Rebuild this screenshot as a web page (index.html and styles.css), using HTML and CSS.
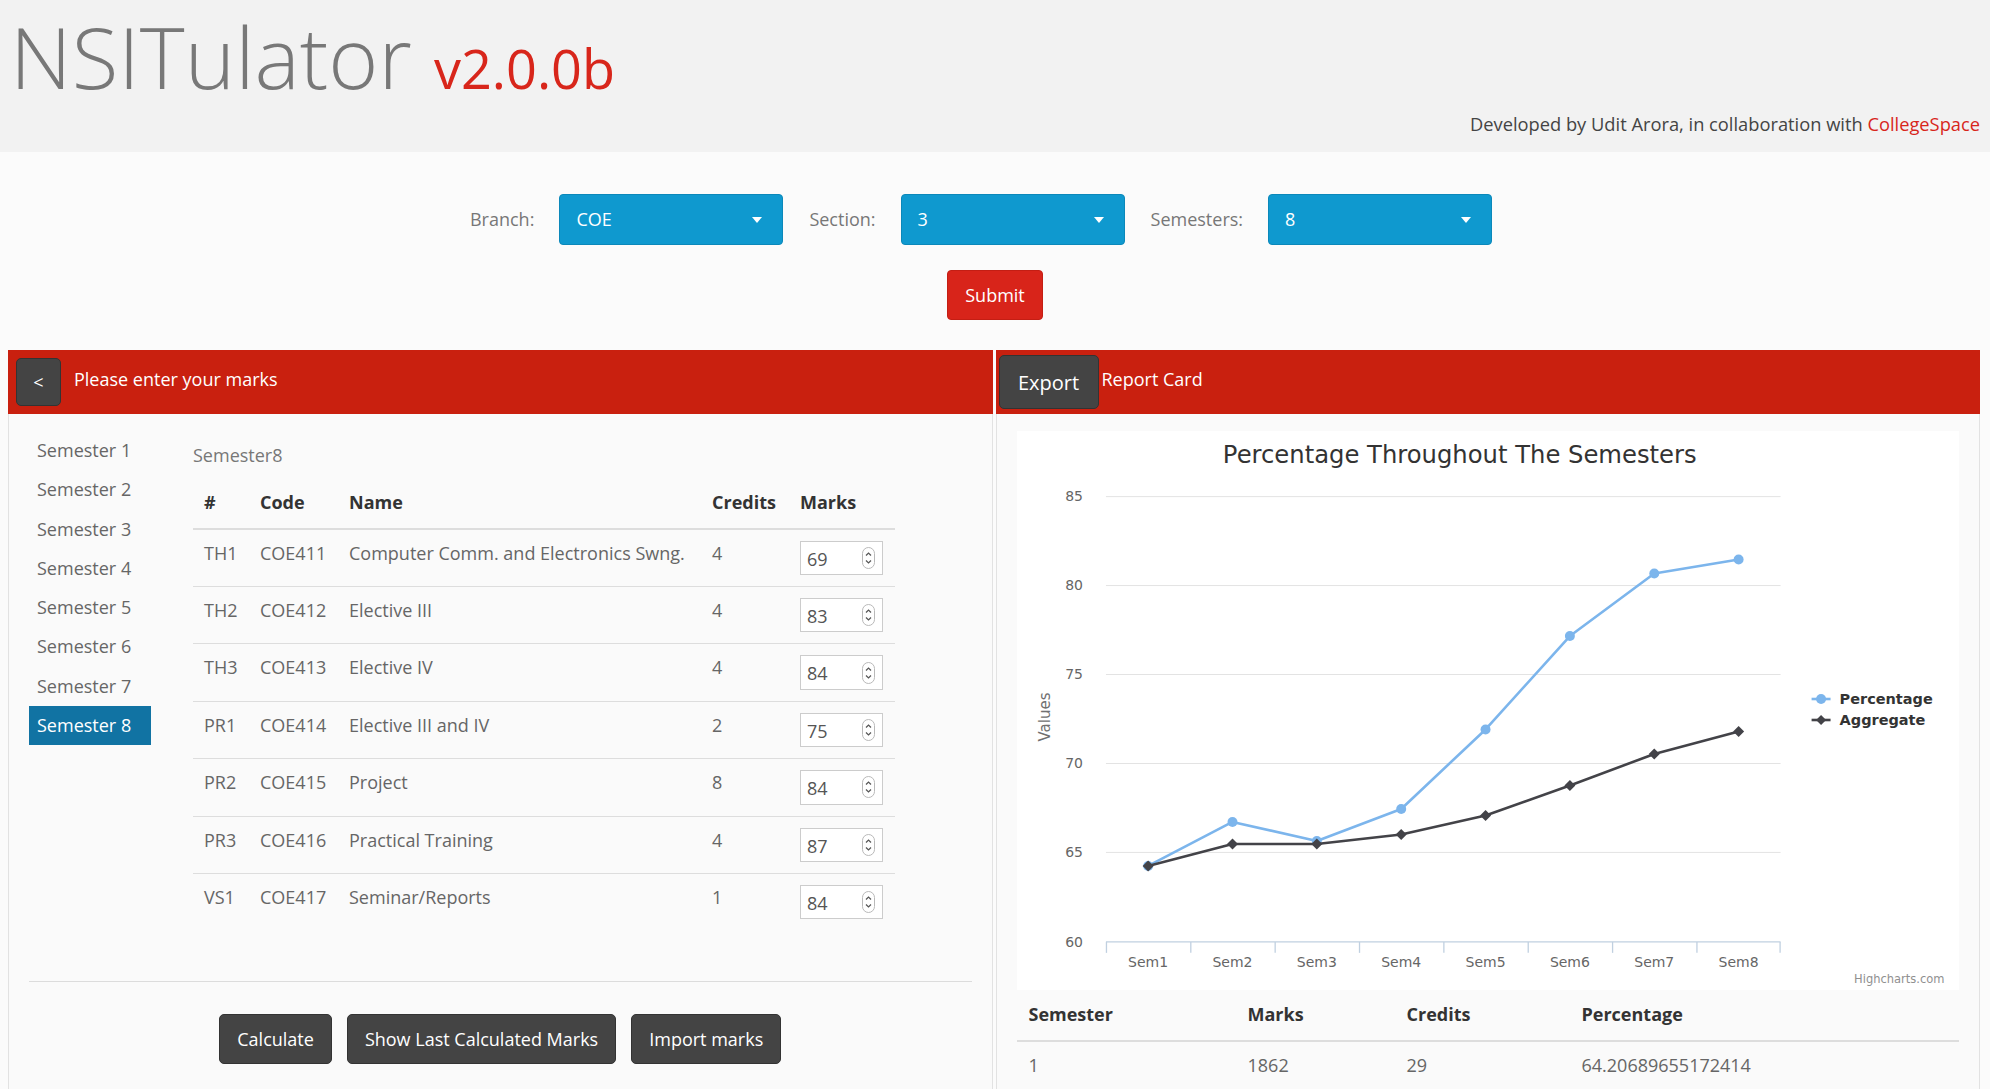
FILE: index.html
```html
<!DOCTYPE html>
<html lang="en">
<head>
<meta charset="utf-8">
<title>NSITulator</title>
<link rel="stylesheet" href="styles.css">
</head>
<body>
<header class="masthead">
  <h1 class="brand">NSITulator <small class="version">v2.0.0b</small></h1>
  <p class="credit">Developed by Udit Arora, in collaboration with <a class="credit-link" href="#">CollegeSpace</a></p>
</header>

<section class="controls">
  <div class="selectors">
    <label class="field-label">Branch:</label>
    <div class="select-btn"><span>COE</span><span class="caret"></span></div>
    <label class="field-label">Section:</label>
    <div class="select-btn"><span>3</span><span class="caret"></span></div>
    <label class="field-label">Semesters:</label>
    <div class="select-btn select-last"><span>8</span><span class="caret"></span></div>
  </div>
  <button class="btn-submit">Submit</button>
</section>

<main class="panels">
  <section class="panel">
    <div class="panel-head panel-head-left">
      <button class="btn-dark btn-back">&lt;</button>
      <span class="head-title">Please enter your marks</span>
    </div>
    <div class="panel-body">
      <div class="marks-layout">
        <ul class="sem-nav">
          <li class="sem-item">Semester 1</li>
          <li class="sem-item">Semester 2</li>
          <li class="sem-item">Semester 3</li>
          <li class="sem-item">Semester 4</li>
          <li class="sem-item">Semester 5</li>
          <li class="sem-item">Semester 6</li>
          <li class="sem-item">Semester 7</li>
          <li class="sem-item sem-active">Semester 8</li>
        </ul>
        <div class="sem-content">
          <div class="sem-title">Semester8</div>
          <table class="marks-table">
            <colgroup><col class="c-num"><col class="c-code"><col class="c-name"><col class="c-cred"><col class="c-marks"></colgroup>
            <thead>
              <tr><th>#</th><th>Code</th><th>Name</th><th>Credits</th><th>Marks</th></tr>
            </thead>
            <tbody>
              <tr><td>TH1</td><td>COE411</td><td>Computer Comm. and Electronics Swng.</td><td>4</td><td><div class="mark-input"><span>69</span><svg class="spin" viewBox="0 0 13 22" width="13" height="22"><rect x="0.5" y="0.5" width="12" height="21" rx="6" fill="#fff" stroke="#b9b9b9"/><path d="M4 8.5 L6.5 6 L9 8.5 M4 13.5 L6.5 16 L9 13.5" fill="none" stroke="#555" stroke-width="1.2"/></svg></div></td></tr>
              <tr><td>TH2</td><td>COE412</td><td>Elective III</td><td>4</td><td><div class="mark-input"><span>83</span><svg class="spin" viewBox="0 0 13 22" width="13" height="22"><rect x="0.5" y="0.5" width="12" height="21" rx="6" fill="#fff" stroke="#b9b9b9"/><path d="M4 8.5 L6.5 6 L9 8.5 M4 13.5 L6.5 16 L9 13.5" fill="none" stroke="#555" stroke-width="1.2"/></svg></div></td></tr>
              <tr><td>TH3</td><td>COE413</td><td>Elective IV</td><td>4</td><td><div class="mark-input"><span>84</span><svg class="spin" viewBox="0 0 13 22" width="13" height="22"><rect x="0.5" y="0.5" width="12" height="21" rx="6" fill="#fff" stroke="#b9b9b9"/><path d="M4 8.5 L6.5 6 L9 8.5 M4 13.5 L6.5 16 L9 13.5" fill="none" stroke="#555" stroke-width="1.2"/></svg></div></td></tr>
              <tr><td>PR1</td><td>COE414</td><td>Elective III and IV</td><td>2</td><td><div class="mark-input"><span>75</span><svg class="spin" viewBox="0 0 13 22" width="13" height="22"><rect x="0.5" y="0.5" width="12" height="21" rx="6" fill="#fff" stroke="#b9b9b9"/><path d="M4 8.5 L6.5 6 L9 8.5 M4 13.5 L6.5 16 L9 13.5" fill="none" stroke="#555" stroke-width="1.2"/></svg></div></td></tr>
              <tr><td>PR2</td><td>COE415</td><td>Project</td><td>8</td><td><div class="mark-input"><span>84</span><svg class="spin" viewBox="0 0 13 22" width="13" height="22"><rect x="0.5" y="0.5" width="12" height="21" rx="6" fill="#fff" stroke="#b9b9b9"/><path d="M4 8.5 L6.5 6 L9 8.5 M4 13.5 L6.5 16 L9 13.5" fill="none" stroke="#555" stroke-width="1.2"/></svg></div></td></tr>
              <tr><td>PR3</td><td>COE416</td><td>Practical Training</td><td>4</td><td><div class="mark-input"><span>87</span><svg class="spin" viewBox="0 0 13 22" width="13" height="22"><rect x="0.5" y="0.5" width="12" height="21" rx="6" fill="#fff" stroke="#b9b9b9"/><path d="M4 8.5 L6.5 6 L9 8.5 M4 13.5 L6.5 16 L9 13.5" fill="none" stroke="#555" stroke-width="1.2"/></svg></div></td></tr>
              <tr><td>VS1</td><td>COE417</td><td>Seminar/Reports</td><td>1</td><td><div class="mark-input"><span>84</span><svg class="spin" viewBox="0 0 13 22" width="13" height="22"><rect x="0.5" y="0.5" width="12" height="21" rx="6" fill="#fff" stroke="#b9b9b9"/><path d="M4 8.5 L6.5 6 L9 8.5 M4 13.5 L6.5 16 L9 13.5" fill="none" stroke="#555" stroke-width="1.2"/></svg></div></td></tr>
            </tbody>
          </table>
        </div>
      </div>
      <hr class="divider">
      <div class="actions">
        <button class="btn-dark btn-action">Calculate</button>
        <button class="btn-dark btn-action">Show Last Calculated Marks</button>
        <button class="btn-dark btn-action">Import marks</button>
      </div>
    </div>
  </section>

  <section class="panel">
    <div class="panel-head panel-head-right">
      <button class="btn-dark btn-export">Export</button>
      <span class="head-title head-title-tight">Report Card</span>
    </div>
    <div class="panel-body panel-body-right">
      <div class="chart">
        <svg class="chart-svg" viewBox="0 0 943 559" xmlns="http://www.w3.org/2000/svg">
          <text x="443" y="32" text-anchor="middle" class="ch-title">Percentage Throughout The Semesters</text>
          <g stroke="#e3e3e3" stroke-width="1">
            <line x1="89" y1="65.5" x2="764" y2="65.5"/>
            <line x1="89" y1="154.5" x2="764" y2="154.5"/>
            <line x1="89" y1="243.5" x2="764" y2="243.5"/>
            <line x1="89" y1="332.5" x2="764" y2="332.5"/>
            <line x1="89" y1="421.5" x2="764" y2="421.5"/>
          </g>
          <g stroke="#c0d0e0" stroke-width="1.3">
            <line x1="89" y1="511" x2="764" y2="511"/>
            <line x1="89.5" y1="511" x2="89.5" y2="522"/>
            <line x1="173.9" y1="511" x2="173.9" y2="522"/>
            <line x1="258.3" y1="511" x2="258.3" y2="522"/>
            <line x1="342.7" y1="511" x2="342.7" y2="522"/>
            <line x1="427.1" y1="511" x2="427.1" y2="522"/>
            <line x1="511.5" y1="511" x2="511.5" y2="522"/>
            <line x1="595.9" y1="511" x2="595.9" y2="522"/>
            <line x1="680.3" y1="511" x2="680.3" y2="522"/>
            <line x1="763.5" y1="511" x2="763.5" y2="522"/>
          </g>
          <g class="ch-axis" text-anchor="end">
            <text x="66" y="70">85</text>
            <text x="66" y="159">80</text>
            <text x="66" y="248">75</text>
            <text x="66" y="337">70</text>
            <text x="66" y="426">65</text>
            <text x="66" y="516">60</text>
          </g>
          <g class="ch-axis" text-anchor="middle">
            <text x="131.2" y="536">Sem1</text>
            <text x="215.6" y="536">Sem2</text>
            <text x="300" y="536">Sem3</text>
            <text x="384.4" y="536">Sem4</text>
            <text x="468.8" y="536">Sem5</text>
            <text x="553.2" y="536">Sem6</text>
            <text x="637.6" y="536">Sem7</text>
            <text x="722" y="536">Sem8</text>
          </g>
          <text class="ch-ytitle" transform="translate(33 286) rotate(-90)" text-anchor="middle">Values</text>
          <polyline fill="none" stroke="#7cb5ec" stroke-width="2.6" stroke-linejoin="round" points="131.2,435 215.6,391 300,410 384.4,378 468.8,298.5 553.2,205 637.6,142.5 722,128.5"/>
          <g fill="#7cb5ec">
            <circle cx="131.2" cy="435" r="5"/><circle cx="215.6" cy="391" r="5"/><circle cx="300" cy="410" r="5"/><circle cx="384.4" cy="378" r="5"/><circle cx="468.8" cy="298.5" r="5"/><circle cx="553.2" cy="205" r="5"/><circle cx="637.6" cy="142.5" r="5"/><circle cx="722" cy="128.5" r="5"/>
          </g>
          <polyline fill="none" stroke="#434348" stroke-width="2.6" stroke-linejoin="round" points="131.2,435 215.6,413 300,413 384.4,403.5 468.8,384.5 553.2,354.5 637.6,323 722,300.5"/>
          <g fill="#434348">
            <path d="M131.2 429.5 L136.7 435 L131.2 440.5 L125.7 435 Z"/>
            <path d="M215.6 407.5 L221.1 413 L215.6 418.5 L210.1 413 Z"/>
            <path d="M300 407.5 L305.5 413 L300 418.5 L294.5 413 Z"/>
            <path d="M384.4 398 L389.9 403.5 L384.4 409 L378.9 403.5 Z"/>
            <path d="M468.8 379 L474.3 384.5 L468.8 390 L463.3 384.5 Z"/>
            <path d="M553.2 349 L558.7 354.5 L553.2 360 L547.7 354.5 Z"/>
            <path d="M637.6 317.5 L643.1 323 L637.6 328.5 L632.1 323 Z"/>
            <path d="M722 295 L727.5 300.5 L722 306 L716.5 300.5 Z"/>
          </g>
          <g>
            <line x1="795" y1="268" x2="814" y2="268" stroke="#7cb5ec" stroke-width="2.6"/>
            <circle cx="804.5" cy="268" r="5" fill="#7cb5ec"/>
            <text x="823" y="273" class="ch-legend">Percentage</text>
            <line x1="795" y1="289" x2="814" y2="289" stroke="#434348" stroke-width="2.6"/>
            <path d="M804.5 284 L809.5 289 L804.5 294 L799.5 289 Z" fill="#434348"/>
            <text x="823" y="294" class="ch-legend">Aggregate</text>
          </g>
          <text x="928" y="552" text-anchor="end" class="ch-credit">Highcharts.com</text>
        </svg>
      </div>
      <table class="report-table">
        <colgroup><col class="r-sem"><col class="r-marks"><col class="r-cred"><col class="r-pct"></colgroup>
        <thead>
          <tr><th>Semester</th><th>Marks</th><th>Credits</th><th>Percentage</th></tr>
        </thead>
        <tbody>
          <tr><td>1</td><td>1862</td><td>29</td><td>64.20689655172414</td></tr>
          <tr><td>2</td><td>1934</td><td>29</td><td>66.6896551724138</td></tr>
        </tbody>
      </table>
    </div>
  </section>
</main>
</body>
</html>
```

FILE: styles.css
```css
* { box-sizing: border-box; }

body {
  margin: 0;
  background: #fbfbfb;
  font-family: "Open Sans", "Liberation Sans", sans-serif;
  font-size: 18px;
  line-height: 1.4286;
  color: #555;
}

/* ---------- header ---------- */
.masthead {
  background: #f2f2f2;
  height: 152px;
  padding: 10px 10px 0 10px;
}
.brand {
  margin: 0;
  font-weight: 300;
  font-size: 85.5px;
  line-height: 92px;
  color: #787878;
}
.version {
  font-size: 54px;
  font-weight: 400;
  color: #d8261b;
}
.credit {
  margin: -3px 0 0;
  text-align: right;
  font-size: 18.3px;
  color: #444;
}
.credit-link {
  color: #d8261b;
  text-decoration: none;
}

/* ---------- controls ---------- */
.controls {
  padding-top: 42px;
}
.selectors {
  display: flex;
  justify-content: center;
  align-items: center;
  padding-right: 28px;
}
.field-label {
  color: #777;
  margin-right: 25px;
}
.select-btn {
  width: 224px;
  height: 51px;
  margin-right: 26px;
  padding: 0 20px 0 16px;
  display: flex;
  align-items: center;
  justify-content: space-between;
  background: #0f99cf;
  border: 1px solid #0b88ba;
  border-radius: 4px;
  color: #fff;
}
.select-last { margin-right: 0; }
.caret {
  width: 0;
  height: 0;
  border-top: 6px solid #fff;
  border-left: 5px solid transparent;
  border-right: 5px solid transparent;
}
.btn-submit {
  display: block;
  margin: 25px auto 0;
  width: 96px;
  height: 50px;
  background: #d8241a;
  border: 1px solid #c41e14;
  border-radius: 4px;
  color: #fff;
  font-family: inherit;
  font-size: 18px;
  padding: 0;
}

/* ---------- panels ---------- */
.panels {
  margin-top: 30px;
  display: grid;
  grid-template-columns: 1fr 1fr;
  gap: 3px;
  padding: 0 10px 0 8px;
}
.panel {
  border: 1px solid #e2e2e2;
  background: #fafafa;
}
.panel-head {
  height: 64px;
  margin: -1px -1px 0;
  background: #c9200f;
  display: flex;
  align-items: center;
  color: #fff;
}
.panel-head-left { padding: 0 8px; }
.panel-head-right { padding: 0 3px; }
.head-title {
  margin-left: 13px;
  margin-bottom: 5px;
  color: #fff;
}
.head-title-tight { margin-left: 3px; }

.btn-dark {
  background: #444;
  border: 1px solid #333;
  border-radius: 5px;
  color: #fff;
  font-family: inherit;
  font-size: 18px;
  padding: 0;
}
.btn-back {
  width: 45px;
  height: 48px;
}
.btn-export {
  width: 100px;
  height: 54px;
  font-size: 20px;
}

.panel-body {
  padding: 17px 20px 7px;
}
.marks-layout {
  display: flex;
  align-items: flex-start;
}
.sem-nav {
  list-style: none;
  margin: 0 42px 0 0;
  padding: 0;
  width: 122px;
}
.sem-item {
  height: 39.3px;
  line-height: 39.3px;
  padding: 0 8px;
  color: #666;
}
.sem-active {
  background: #1173a3;
  color: #fff;
}
.sem-content {
  width: 702px;
}
.sem-title {
  margin: 11px 0 10px;
  line-height: 26px;
  color: #777;
}

.marks-table,
.report-table {
  width: 100%;
  border-collapse: collapse;
  table-layout: fixed;
}
.c-num { width: 56px; }
.c-code { width: 89px; }
.c-name { width: 363px; }
.c-cred { width: 88px; }
.c-marks { width: 106px; }

.marks-table th,
.report-table th {
  text-align: left;
  padding: 12px 11px;
  line-height: 25.7px;
  font-weight: 700;
  color: #333;
  border-bottom: 2px solid #ddd;
}
.marks-table td,
.report-table td {
  padding: 11px;
  line-height: 25.7px;
  vertical-align: top;
  border-top: 1px solid #ddd;
  color: #666;
  white-space: nowrap;
}
.mark-input {
  width: 83px;
  height: 34.4px;
  background: #fff;
  border: 1px solid #ccc;
  display: flex;
  align-items: center;
  justify-content: space-between;
  padding: 3px 7px 0 6px;
  color: #555;
}
.spin { display: block; margin-top: -3px; }

.divider {
  margin: 51px 0 32px;
  border: 0;
  border-top: 1px solid #dcdcdc;
}
.actions {
  display: flex;
  justify-content: center;
  gap: 15px;
}
.btn-action {
  height: 50px;
  padding: 0 17px;
}

/* ---------- chart ---------- */
.panel-body-right { padding: 17px 20px 0; }
.chart {
  background: #fff;
  height: 559px;
}
.chart-svg {
  display: block;
  width: 100%;
  height: 559px;
  font-family: "DejaVu Sans", Verdana, sans-serif;
}
.ch-title { font-size: 24.3px; fill: #333; }
.ch-axis { font-size: 14px; fill: #666; }
.ch-ytitle { font-size: 15px; fill: #707070; }
.ch-legend { font-size: 14.5px; font-weight: 700; fill: #333; }
.ch-credit { font-size: 11.5px; fill: #909090; }

.r-sem { width: 219px; }
.r-marks { width: 159px; }
.r-cred { width: 175px; }
.report-table th,
.report-table td { padding-left: 12px; }
```
